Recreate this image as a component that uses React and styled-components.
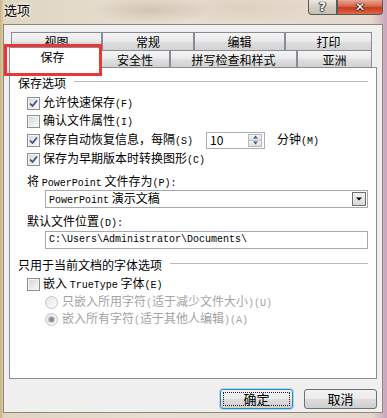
import React from "react";
import styled, { createGlobalStyle } from "styled-components";

const GlobalStyle = createGlobalStyle`
  html, body {
    margin: 0;
    padding: 0;
  }
  body {
    width: 387px;
    height: 418px;
    overflow: hidden;
    font-family: "Noto Sans CJK SC", "Noto Sans", sans-serif;
    font-size: 12px;
    color: #000;
  }
`;

const Window = styled.div`
  width: 387px;
  height: 418px;
  display: flex;
  flex-direction: column;
  background:
    radial-gradient(ellipse 60px 14px at 150px 10px, rgba(190, 170, 150, 0.5), transparent),
    radial-gradient(ellipse 80px 16px at 240px 8px, rgba(215, 200, 180, 0.6), transparent),
    linear-gradient(90deg, #cbb27a 0, #e0d5c2 4px, #e8dfd2 40%, #e4d8cc 96%, #c8a6bd 100%);
`;

const TitleBar = styled.div`
  height: 24px;
  display: flex;
  justify-content: space-between;
  align-items: flex-start;
`;

const Title = styled.div`
  padding: 3px 0 0 4px;
  font-size: 13px;
  line-height: 14px;
  text-shadow: 0 0 6px #fff, 0 0 3px #fff;
`;

const Caption = styled.div`
  display: flex;
  margin-right: 4px;
`;

const CaptionButton = styled.div`
  width: ${(p) => p.$w}px;
  height: 15px;
  box-sizing: border-box;
  border: 1px solid #5d5a56;
  border-top: none;
  border-radius: ${(p) => p.$radius};
  background: ${(p) => p.$bg};
  display: flex;
  align-items: center;
  justify-content: center;
  color: #fff;
  font-family: "DejaVu Sans", sans-serif;
  font-weight: bold;
  font-size: 12px;
  line-height: 12px;
  text-shadow: 0 0 1px #333, 1px 0 1px #333, -1px 0 1px #333, 0 1px 1px #333;
`;

const Client = styled.div`
  margin-left: 3px;
  width: 380px;
  height: 389px;
  box-sizing: border-box;
  border: 1px solid #8d867a;
  background: #f0f0f0;
  padding: 7px 5px 0 5px;
`;

const TabArea = styled.div`
  position: relative;
  margin-left: 2px;
  width: 361px;
`;

const TabRow = styled.div`
  display: flex;
  align-items: flex-start;
  height: ${(p) => p.$h}px;
`;

const Tab = styled.div`
  box-sizing: border-box;
  width: ${(p) => p.$w}px;
  height: ${(p) => p.$h}px;
  border: 1px solid #898c95;
  border-bottom: none;
  background: linear-gradient(#f4f4f4 0%, #ebebeb 45%, #dedede 55%, #d2d2d2 100%);
  display: flex;
  align-items: center;
  justify-content: center;
  font-size: 12px;
  line-height: 14px;
  padding-top: 1px;
`;

const ActiveTab = styled(Tab)`
  position: relative;
  z-index: 1;
  height: 21px;
  margin: -3px -2px 0 -2px;
  background: #fff;
  padding: 0 6px 2px 0;
`;

const Highlight = styled.div`
  position: absolute;
  z-index: 2;
  left: -7px;
  top: 12px;
  width: 98px;
  height: 32px;
  box-sizing: border-box;
  border: 3px solid #ee3535;
`;

const Panel = styled.div`
  box-sizing: border-box;
  width: 368px;
  height: 312px;
  border: 1px solid #898c95;
  background: #fff;
  display: flex;
  flex-direction: column;
`;

const GroupHeader = styled.div`
  display: flex;
  align-items: center;
  gap: 8px;
  height: 14px;
  margin: ${(p) => p.$top}px 8px 0 8px;
  line-height: 14px;
`;

const Rule = styled.div`
  flex: 1;
  height: 1px;
  margin-top: -3px;
  background: #b9b9b9;
`;

const Row = styled.div`
  display: flex;
  align-items: center;
  height: ${(p) => p.$h || 18}px;
  margin-top: ${(p) => p.$top || 0}px;
  padding-left: ${(p) => p.$indent}px;
  gap: 3px;
  line-height: 14px;
  color: ${(p) => (p.$disabled ? "#a3a3a3" : "#000")};
  white-space: nowrap;
`;

const Box = styled.div`
  width: 13px;
  height: 13px;
  box-sizing: border-box;
  border: 1px solid #8e8f8f;
  box-shadow: inset 0 0 0 1px #f4f4f4;
  background: linear-gradient(135deg, #d2d5da 0%, #f3f3f3 80%, #fafafa 100%);
  flex: none;
  display: flex;
  align-items: center;
  justify-content: center;
`;

const Radio = styled.div`
  width: 13px;
  height: 13px;
  box-sizing: border-box;
  border-radius: 50%;
  border: 1px solid #c4c4c4;
  background: linear-gradient(135deg, #e6e6e6, #fbfbfb);
  flex: none;
  margin-right: 1px;
  display: flex;
  align-items: center;
  justify-content: center;
`;

const RadioDot = styled.div`
  width: 5px;
  height: 5px;
  border-radius: 50%;
  background: #8f8f8f;
  box-shadow: 0 0 0 1px #c9c9c9;
`;

const Latin = styled.span`
  font-family: "Liberation Mono", monospace;
  font-size: 10px;
`;

const Spin = styled.div`
  margin: 0 9px 0 10px;
  width: 59px;
  height: 17px;
  box-sizing: border-box;
  border: 1px solid #abadb3;
  display: flex;
  align-items: center;
  justify-content: space-between;
  padding-left: 3px;
`;

const SpinButtons = styled.div`
  width: 14px;
  height: 13px;
  margin-right: 2px;
  display: flex;
  flex-direction: column;
  border: 1px solid #b5b8be;
  box-sizing: border-box;
`;

const SpinHalf = styled.div`
  flex: 1;
  background: linear-gradient(#f5f5f5, #dcdcdc);
  display: flex;
  align-items: center;
  justify-content: center;
  & + & {
    border-top: 1px solid #c5c5c5;
  }
`;

const Field = styled.div`
  margin: ${(p) => p.$top}px 0 0 35px;
  width: 323px;
  height: 18px;
  box-sizing: border-box;
  border: 1px solid #a5a8ae;
  display: flex;
  align-items: center;
  justify-content: space-between;
  padding-left: 3px;
  line-height: 14px;
  white-space: nowrap;
`;

const DropButton = styled.div`
  width: 14px;
  height: 14px;
  margin-right: 1px;
  box-sizing: border-box;
  border: 1px solid #707070;
  background: linear-gradient(#f3f3f3, #d8d8d8);
  display: flex;
  align-items: center;
  justify-content: center;
`;

const Footer = styled.div`
  display: flex;
  justify-content: flex-end;
  gap: 11px;
  margin-top: 10px;
  width: 368px;
`;

const Button = styled.div`
  position: relative;
  width: 73px;
  height: 20px;
  box-sizing: border-box;
  border: 1px solid ${(p) => (p.$default ? "#3c7fb1" : "#707070")};
  border-radius: 3px;
  background: linear-gradient(#f2f2f2 0%, #ebebeb 48%, #dddddd 52%, #cfcfcf 100%);
  box-shadow: ${(p) => (p.$default ? "0 0 0 1px #9fdcf7" : "none")};
  display: flex;
  align-items: center;
  justify-content: center;
  font-size: 13px;
  line-height: 14px;
  &::after {
    content: "";
    display: ${(p) => (p.$default ? "block" : "none")};
    position: absolute;
    inset: 2px;
    border: 1px dotted #222;
  }
`;

const Check = () => (
  <svg width="9" height="9" viewBox="0 0 9 9">
    <polyline points="1,4.5 3.5,7 8,1.5" fill="none" stroke="#3b4f83" strokeWidth="1.7" />
  </svg>
);

const Tri = ({ down, color = "#3d5b8e", w = 5 }) => (
  <svg width={w + 2} height="4" viewBox={`0 0 ${w + 2} 4`}>
    <polygon points={down ? `1,0.5 ${w + 1},0.5 ${(w + 2) / 2},3.5` : `1,3.5 ${w + 1},3.5 ${(w + 2) / 2},0.5`} fill={color} />
  </svg>
);

const CheckItem = ({ checked, children, top }) => (
  <Row $indent={17} $top={top}>
    <Box>{checked && <Check />}</Box>
    <span>{children}</span>
  </Row>
);

export default function App() {
  return (
    <>
      <GlobalStyle />
      <Window>
        <TitleBar>
          <Title>选项</Title>
          <Caption>
            <CaptionButton $w={29} $radius="0 0 0 4px" $bg="linear-gradient(#ece8e2, #d3cdc4 50%, #c6bfb5)">
              ?
            </CaptionButton>
            <CaptionButton $w={46} $radius="0 0 4px 0" $bg="linear-gradient(#e9a795 0%, #d8654a 45%, #c73b1f 55%, #dd6844 100%)">
              ✕
            </CaptionButton>
          </Caption>
        </TitleBar>
        <Client>
          <TabArea>
            <TabRow $h={18}>
              <Tab $w={91} $h={18}>视图</Tab>
              <Tab $w={92} $h={18}>常规</Tab>
              <Tab $w={91} $h={18}>编辑</Tab>
              <Tab $w={87} $h={18}>打印</Tab>
            </TabRow>
            <TabRow $h={17}>
              <ActiveTab $w={93}>保存</ActiveTab>
              <Tab $w={70} $h={17}>安全性</Tab>
              <Tab $w={127} $h={17}>拼写检查和样式</Tab>
              <Tab $w={75} $h={17}>亚洲</Tab>
            </TabRow>
            <Highlight />
          </TabArea>
          <Panel>
            <GroupHeader $top={8}>
              <span>保存选项</span>
              <Rule />
            </GroupHeader>
            <CheckItem checked top={4}>
              允许快速保存<Latin>(F)</Latin>
            </CheckItem>
            <CheckItem>
              确认文件属性<Latin>(I)</Latin>
            </CheckItem>
            <Row $indent={17} $h={20}>
              <Box>
                <Check />
              </Box>
              <span>
                保存自动恢复信息，每隔<Latin>(S)</Latin>
              </span>
              <Spin>
                <span>10</span>
                <SpinButtons>
                  <SpinHalf>
                    <Tri />
                  </SpinHalf>
                  <SpinHalf>
                    <Tri down />
                  </SpinHalf>
                </SpinButtons>
              </Spin>
              <span>
                分钟<Latin>(M)</Latin>
              </span>
            </Row>
            <CheckItem checked>
              保存为早期版本时转换图形<Latin>(C)</Latin>
            </CheckItem>
            <Row $indent={17} $h={14} $top={7}>
              <span>
                将 <Latin>PowerPoint</Latin> 文件存为<Latin>(P):</Latin>
              </span>
            </Row>
            <Field $top={1}>
              <span>
                <Latin>PowerPoint</Latin> 演示文稿
              </span>
              <DropButton>
                <Tri down color="#000" w={6} />
              </DropButton>
            </Field>
            <Row $indent={17} $h={14} $top={7}>
              <span>
                默认文件位置<Latin>(D):</Latin>
              </span>
            </Row>
            <Field $top={2}>
              <Latin>C:\Users\Administrator\Documents\</Latin>
            </Field>
            <GroupHeader $top={9}>
              <span>只用于当前文档的字体选项</span>
              <Rule />
            </GroupHeader>
            <CheckItem top={3}>
              嵌入 <Latin>TrueType</Latin> 字体<Latin>(E)</Latin>
            </CheckItem>
            <Row $indent={35} $disabled>
              <Radio />
              <span>
                只嵌入所用字符<Latin>(</Latin>适于减少文件大小<Latin>)(U)</Latin>
              </span>
            </Row>
            <Row $indent={35} $h={17} $disabled>
              <Radio>
                <RadioDot />
              </Radio>
              <span>
                嵌入所有字符<Latin>(</Latin>适于其他人编辑<Latin>)(A)</Latin>
              </span>
            </Row>
          </Panel>
          <Footer>
            <Button $default>确定</Button>
            <Button>取消</Button>
          </Footer>
        </Client>
      </Window>
    </>
  );
}
